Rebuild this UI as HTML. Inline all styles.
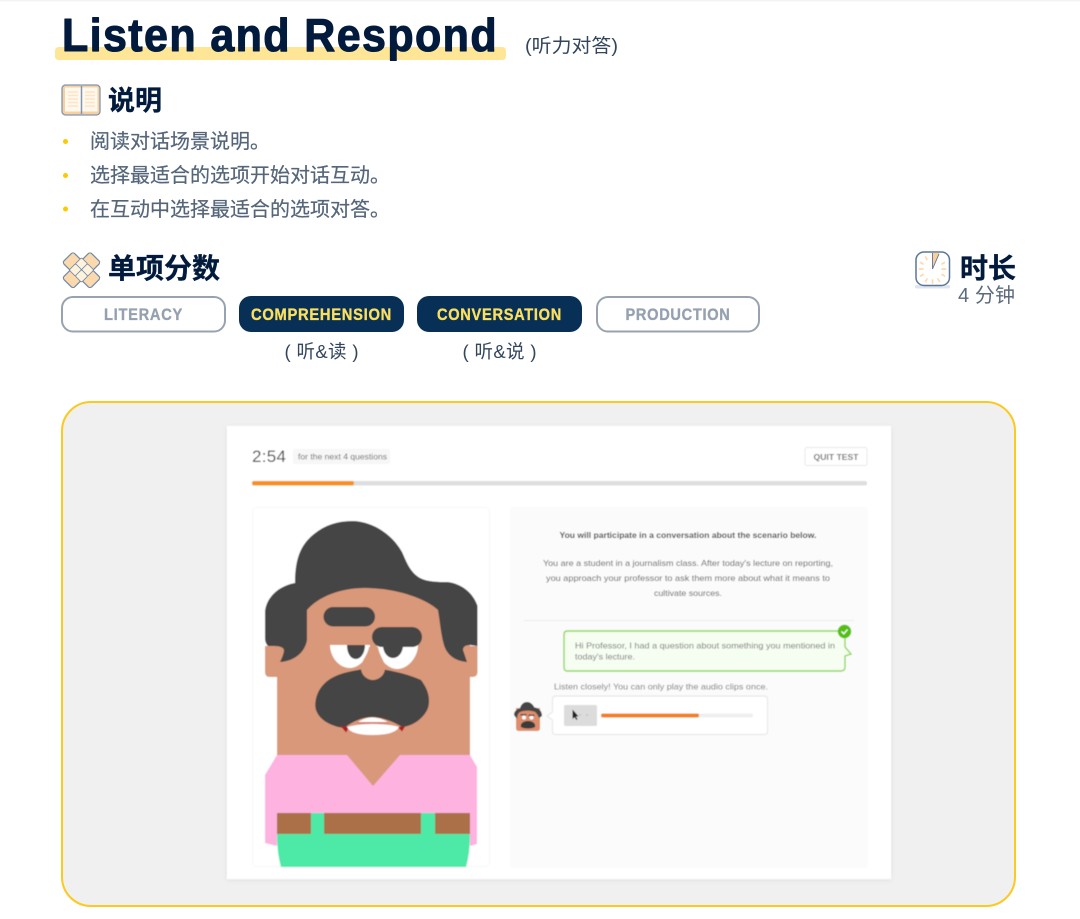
<!DOCTYPE html>
<html lang="zh">
<head>
<meta charset="utf-8">
<title>Listen and Respond</title>
<style>
html,body{margin:0;padding:0;background:#fff;width:1080px;height:919px;overflow:hidden}
svg{display:block}
text{font-family:"Liberation Sans","Noto Sans CJK SC",sans-serif}
.cn{fill:#55657a;font-size:20px;stroke:#55657a;stroke-width:.2}
.h{fill:#021b3c;font-size:28px;font-weight:700;stroke:#021b3c;stroke-width:.35}
.ui{fill:#6b6b6b;font-size:8px}
.p{font-size:16.5px;font-weight:700;letter-spacing:.8px;stroke-width:.35}
</style>
</head>
<body>
<svg width="1080" height="919" viewBox="0 0 1080 919" xmlns="http://www.w3.org/2000/svg">
<defs>
<filter id="b" x="-2%" y="-2%" width="104%" height="104%"><feGaussianBlur stdDeviation="0.4"/></filter>
<filter id="s" x="-5%" y="-5%" width="110%" height="110%"><feDropShadow dx="0" dy="1" stdDeviation="2.5" flood-color="#000" flood-opacity=".08"/></filter>
</defs>
<rect width="1080" height="919" fill="#fff"/>
<rect width="1080" height="1.500" fill="#f4f4f4"/>

<!-- title -->
<rect x="55" y="47" width="451" height="13" rx="3.500" fill="#ffe697"/>
<text x="62" y="51" font-size="46" font-weight="700" fill="#021b3c" letter-spacing="1.500" textLength="436" lengthAdjust="spacingAndGlyphs" stroke="#021b3c" stroke-width="1.100" stroke-linejoin="round">Listen and Respond</text>
<text x="525" y="52" font-size="19" fill="#33465c" textLength="93" lengthAdjust="spacingAndGlyphs">(听力对答)</text>

<!-- 说明 -->
<g>
<rect x="62" y="85" width="38" height="30" rx="3.500" fill="#f8cf9e" stroke="#7f96b5" stroke-width="1.300"/>
<rect x="65" y="87.500" width="16" height="24" fill="#fff8ee"/>
<rect x="82" y="87.500" width="15.500" height="24" fill="#fff8ee"/>
<path d="M68 92h10M68 95.500h10M68 99h10M68 102.500h10M68 106h10M85 92h10M85 95.500h10M85 99h10M85 102.500h10M85 106h10" stroke="#ffe3c2" stroke-width="1.500"/>
<path d="M81.500 86v28" stroke="#7f96b5" stroke-width="1.500"/>
</g>
<text x="108" y="110" class="h" style="font-size:27px">说明</text>

<circle cx="65.500" cy="141.500" r="2.500" fill="#ffc800"/>
<circle cx="65.500" cy="175.500" r="2.500" fill="#ffc800"/>
<circle cx="65.500" cy="209" r="2.500" fill="#ffc800"/>
<text x="90" y="148" class="cn">阅读对话场景说明。</text>
<text x="90" y="182" class="cn">选择最适合的选项开始对话互动。</text>
<text x="90" y="216" class="cn">在互动中选择最适合的选项对答。</text>

<!-- 单项分数 -->
<g stroke="#7089a8" stroke-width="1.200" stroke-linejoin="round">
<rect x="-7.500" y="-7.500" width="15" height="15" rx="2.500" transform="translate(73 262.500) rotate(45)" fill="#fcd9ac"/>
<rect x="-7.500" y="-7.500" width="15" height="15" rx="2.500" transform="translate(90 262.500) rotate(45)" fill="#fcd9ac"/>
<rect x="-7.500" y="-7.500" width="15" height="15" rx="2.500" transform="translate(73 278) rotate(45)" fill="#fcd9ac"/>
<rect x="-7.500" y="-7.500" width="15" height="15" rx="2.500" transform="translate(90 278) rotate(45)" fill="#fcd9ac"/>
<rect x="-4.500" y="-4.500" width="9" height="9" rx="1.500" transform="translate(81.500 264) rotate(45)" fill="#fff3de" stroke-width=".8"/>
<rect x="-4.500" y="-4.500" width="9" height="9" rx="1.500" transform="translate(75.500 270) rotate(45)" fill="#fff3de" stroke-width=".8"/>
<rect x="-4.500" y="-4.500" width="9" height="9" rx="1.500" transform="translate(87.500 270) rotate(45)" fill="#fff3de" stroke-width=".8"/>
<rect x="-4.500" y="-4.500" width="9" height="9" rx="1.500" transform="translate(81.500 276) rotate(45)" fill="#fff3de" stroke-width=".8"/>
</g>
<text x="108" y="278" class="h">单项分数</text>

<!-- pills -->
<rect x="62" y="297" width="163" height="34.500" rx="11" fill="#fff" stroke="#98a3b2" stroke-width="2"/>
<text x="143.500" y="320" text-anchor="middle" class="p" fill="#96a1b0" stroke="#96a1b0" textLength="79" lengthAdjust="spacingAndGlyphs">LITERACY</text>
<rect x="239" y="296" width="165" height="36" rx="12" fill="#082f55"/>
<text x="321.500" y="320" text-anchor="middle" class="p" fill="#fbdf5e" stroke="#fbdf5e" textLength="141" lengthAdjust="spacingAndGlyphs">COMPREHENSION</text>
<rect x="417" y="296" width="165" height="36" rx="12" fill="#082f55"/>
<text x="499.500" y="320" text-anchor="middle" class="p" fill="#fbdf5e" stroke="#fbdf5e" textLength="125" lengthAdjust="spacingAndGlyphs">CONVERSATION</text>
<rect x="597" y="297" width="162" height="34.500" rx="11" fill="#fff" stroke="#98a3b2" stroke-width="2"/>
<text x="678" y="320" text-anchor="middle" class="p" fill="#96a1b0" stroke="#96a1b0" textLength="105" lengthAdjust="spacingAndGlyphs">PRODUCTION</text>

<text x="321.500" y="358" text-anchor="middle" font-size="18.500" fill="#33465c" textLength="74">( 听&amp;读 )</text>
<text x="499.500" y="358" text-anchor="middle" font-size="18.500" fill="#33465c" textLength="74">( 听&amp;说 )</text>

<!-- clock -->
<rect x="915" y="285" width="35" height="3.500" rx="1.500" fill="#dfe5ee"/>
<rect x="916" y="252" width="33.500" height="33.500" rx="8" fill="#fff" stroke="#5c7698" stroke-width="1.500"/>
<path d="M932.500 253V269L939.500 253Z" fill="#fbcf98"/>
<path d="M932.500 253V269L939 254" fill="none" stroke="#5c7698" stroke-width=".9"/>
<path d="M925.500 257l1.500 2.500M920.500 262.500l2.500 1.500M919.500 269h3.500M920.500 276l2.500-1.500M925.500 281.500l1.500-2.500M932.500 283v-3M939.500 281.500l-1.500-2.500M944.500 276l-2.500-1.500M945.500 269h-3.500M944.500 262.500l-2.500 1.500" stroke="#ffd9ac" stroke-width="1.700" stroke-linecap="round"/>
<text x="960" y="278" class="h">时长</text>
<text x="958" y="302" font-size="20" fill="#5b6a7c" textLength="57">4 分钟</text>

<!-- panel -->
<rect x="62" y="402" width="953" height="504" rx="29" fill="#f0f0f0" stroke="#fcc91e" stroke-width="2"/>

<g filter="url(#b)">
<rect x="227" y="426" width="664" height="453" fill="#fff" filter="url(#s)"/>
<text x="252" y="462" font-size="17" fill="#4c4c4c" textLength="34">2:54</text>
<rect x="293" y="449" width="97" height="15" rx="2" fill="#f7f7f7"/>
<text x="298" y="459.500" class="ui" textLength="89" lengthAdjust="spacingAndGlyphs">for the next 4 questions</text>
<rect x="805" y="447.500" width="62" height="18" rx="2" fill="#fff" stroke="#e8e8e8"/>
<text x="836" y="460" text-anchor="middle" font-size="8.500" font-weight="700" fill="#777" textLength="45" lengthAdjust="spacingAndGlyphs">QUIT TEST</text>
<rect x="252" y="481" width="615" height="4.500" rx="2" fill="#dedede"/>
<rect x="252" y="481" width="102" height="4.500" rx="2" fill="#f98f1c"/>

<rect x="252.500" y="507.500" width="237" height="359" rx="4" fill="#fff" stroke="#f7f7f7"/>
<rect x="510" y="507" width="358" height="361" rx="3" fill="#fbfbfb"/>

<!-- character -->
<path d="M300 585H445V600H470V790H277V600H300Z" fill="#d9987a"/>
<path d="M265 646H285V677H270Q265 677 265 672ZM477.500 646H460V677H472Q477.500 677 477.500 672Z" fill="#d9987a"/>
<!-- hair -->
<path d="M265 612C266 598 278 586 295 583C295 560 300 545 314 534C325 525 338 521 352 521C372 521 392 534 402 552C407 563 410 572 420 578C428 582 438 582 447 582C460 583 473 592 477.500 606V646L470 645Q463 645 463 650Q465 656 467 662C455 661 447 655 444 645C441 635 440 622 438 610C425 598 395 588 365 588C340 588 318 597 307 610V640C305 652 295 661 280 662Q284 654 284 650Q283 646 274 646L268 646Q265 643 265 638Z" fill="#454545"/>
<!-- eyes -->
<path d="M330 645H370C370 657 359 668 350 668C339 668 330 657 330 645Z" fill="#fff"/>
<path d="M377 645H418C418 657 408 669 397 669C387 669 377 657 377 645Z" fill="#fff"/>
<path d="M347 645H365C365 654 360 659 356 659C351 659 347 654 347 645Z" fill="#454545"/>
<path d="M383 645H403C403 653 398 658 393 658C388 658 383 653 383 645Z" fill="#454545"/>
<rect x="323.500" y="607" width="51.500" height="19.500" rx="9.700" fill="#454545"/>
<rect x="372" y="627" width="50" height="20" rx="10" fill="#454545"/>
<!-- moustache -->
<path d="M373 668C355 670 335 673 325 683C316 691 314 704 316 710C320 722 335 727 344 728C352 722 362 717 372 717C382 717 394 722 402 727C415 726 425 716 428 708C431 697 427 688 421 680C408 674 390 670 373 668Z" fill="#454545"/>
<path d="M341 726L346 732L349 727M398 727L402 731L405 726" fill="#b01c1c" stroke="#b01c1c" stroke-width=".6"/>
<path d="M347 727Q358 724 372 724Q388 724 399 727Q395 735 372 735Q351 735 347 727Z" fill="#fff"/>
<path d="M358 722Q365 717.500 372 717.500Q380 717.500 388 722Z" fill="#fff"/>
<path d="M357 722.800H388" stroke="#d8606a" stroke-width=".9"/>
<!-- nose -->
<path d="M369 647H378C379 655 385 661 385 668C385 675 379 680 373 680C367 680 361 675 361 668C361 661 368 655 369 647Z" fill="#d9987a"/>
<!-- body -->
<path d="M277 755H347L373 786L400 755H470L477 767V844L470 846V813H277V846L265 843V775Z" fill="#fdb2e0"/>
<path d="M277 813H470V835H277Z" fill="#ac7049"/>
<path d="M311 813H324V835H311ZM421 813H435V835H421Z" fill="#4ee9a6"/>
<path d="M277 834H470Q470 853 466 867H281Q277 853 277 834Z" fill="#4ee9a6"/>

<!-- right text -->
<text x="688" y="538" text-anchor="middle" font-size="8.500" font-weight="700" fill="#444" textLength="257" lengthAdjust="spacingAndGlyphs">You will participate in a conversation about the scenario below.</text>
<text x="688" y="566" text-anchor="middle" font-size="8.500" fill="#5a5a5a" textLength="290" lengthAdjust="spacingAndGlyphs">You are a student in a journalism class. After today's lecture on reporting,</text>
<text x="688" y="581" text-anchor="middle" font-size="8.500" fill="#5a5a5a" textLength="284" lengthAdjust="spacingAndGlyphs">you approach your professor to ask them more about what it means to</text>
<text x="688" y="596" text-anchor="middle" font-size="8.500" fill="#5a5a5a" textLength="68" lengthAdjust="spacingAndGlyphs">cultivate sources.</text>
<rect x="524" y="620" width="330" height="1" fill="#ececec"/>

<!-- green bubble -->
<path d="M567 631H841Q845 631 845 635V647L851 654L845 656V667Q845 671 841 671H567Q564 671 564 667V635Q564 631 567 631Z" fill="#f6fdf1" stroke="#8ed85c" stroke-width="1.400"/>
<circle cx="844.500" cy="631.500" r="6.700" fill="#55bf10"/>
<path d="M841.500 631.500L843.800 633.800L847.500 629.500" fill="none" stroke="#fff" stroke-width="1.300"/>
<text x="575" y="648.500" font-size="8.500" fill="#777" textLength="260" lengthAdjust="spacingAndGlyphs">Hi Professor, I had a question about something you mentioned in</text>
<text x="575" y="659.500" font-size="8.500" fill="#777" textLength="60" lengthAdjust="spacingAndGlyphs">today's lecture.</text>
<text x="554" y="689.500" font-size="8.500" fill="#777" textLength="214" lengthAdjust="spacingAndGlyphs">Listen closely! You can only play the audio clips once.</text>

<!-- audio bubble -->
<path d="M556 696H764Q767.500 696 767.500 699.500V731Q767.500 734.500 764 734.500H556Q552.500 734.500 552.500 731V720L547 716L552.500 712V699.500Q552.500 696 556 696Z" fill="#fff" stroke="#e8e8e8" stroke-width="1.200"/>
<rect x="564" y="705" width="33" height="21" rx="1.500" fill="#dcdcdc"/>
<circle cx="580" cy="715" r="1" fill="#c4c4c4"/><circle cx="587" cy="715" r="1" fill="#c4c4c4"/>
<path d="M572.500 709.500V719L574.700 717.200L576.300 720L577.500 719.300L576 716.600L578.400 716.300Z" fill="#222"/>
<rect x="601" y="713.500" width="152" height="4" rx="2" fill="#efefef"/>
<rect x="601" y="713.500" width="98" height="4" rx="2" fill="#f57d1d"/>

<!-- avatar -->
<path d="M516 708H540V728Q540 731 537 731H519Q516 731 516 728Z" fill="#dd8d6c"/>
<path d="M514 715C514 711 517 709 520 708.500C521 704 524 702 527 702C531 702 533 705 534.500 707.500C539 708 542 711 542 716L539 718C538 715 536 712 534 711.500C529 710 523 710.500 520 712C518 713 517 716 517 719Z" fill="#454545"/>
<circle cx="524" cy="717.500" r="2" fill="#fff"/><circle cx="531.500" cy="717.500" r="2" fill="#fff"/>
<path d="M520.500 714.800h6M528.500 715.300h6" stroke="#454545" stroke-width="1.400"/>
<path d="M528 721C523 721 520 724 521 727C524 729 532 729 535 727C536 724 533 721 528 721Z" fill="#3a3a3a"/>
</g>
</svg>
</body>
</html>
